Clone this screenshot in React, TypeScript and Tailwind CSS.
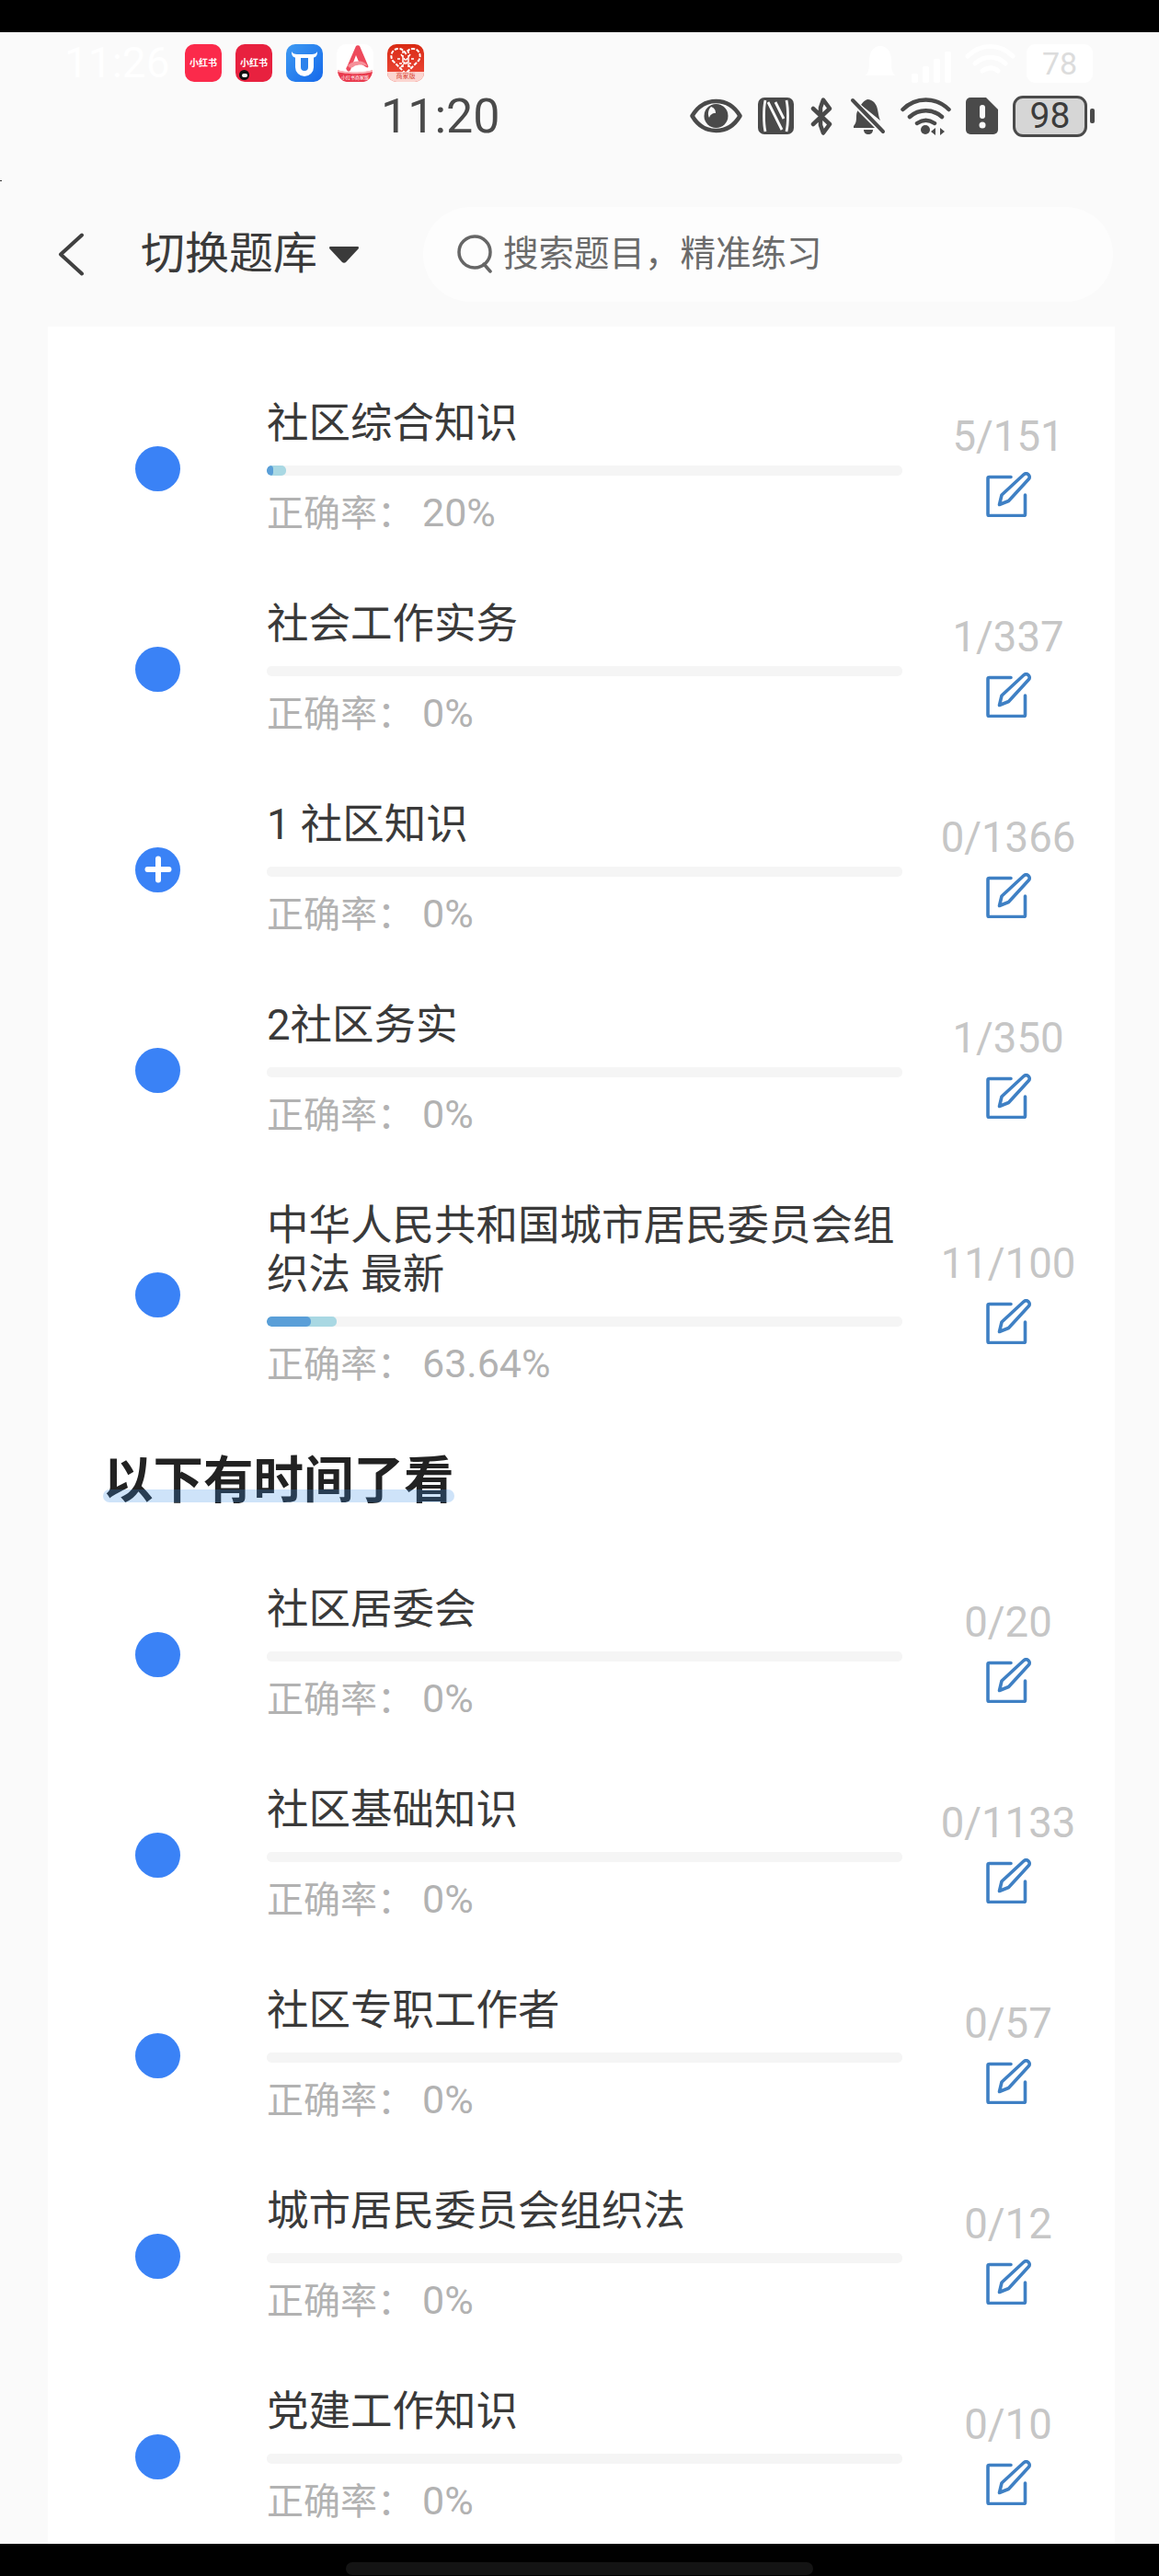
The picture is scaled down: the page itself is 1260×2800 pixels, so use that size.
import { Fragment } from 'react';

interface Subject {
  title: string;
  rate: string;
  count: string;
  plus?: boolean;
  fill?: { total: number; done: number };
}

const primary: Subject[] = [
  { title: '社区综合知识', rate: '20%', count: '5/151', fill: { total: 21, done: 7 } },
  { title: '社会工作实务', rate: '0%', count: '1/337' },
  { title: '1 社区知识', rate: '0%', count: '0/1366', plus: true },
  { title: '2社区务实', rate: '0%', count: '1/350' },
  { title: '中华人民共和国城市居民委员会组织法 最新', rate: '63.64%', count: '11/100', fill: { total: 76, done: 48 } },
];

const later: Subject[] = [
  { title: '社区居委会', rate: '0%', count: '0/20' },
  { title: '社区基础知识', rate: '0%', count: '0/1133' },
  { title: '社区专职工作者', rate: '0%', count: '0/57' },
  { title: '城市居民委员会组织法', rate: '0%', count: '0/12' },
  { title: '党建工作知识', rate: '0%', count: '0/10' },
];

function EditIcon() {
  return (
    <svg width="50" height="49" viewBox="0 0 50 49" fill="none" stroke="#3f80c4" strokeWidth="3.600" strokeLinecap="round" strokeLinejoin="round">
      <path d="M27 5.500H3.500a1.500 1.500 0 0 0-1.500 1.500V46a1.500 1.500 0 0 0 1.500 1.500H41a1.500 1.500 0 0 0 1.500-1.500V25" />
      <path d="M14.500 35.500l2.500-10.500L41 2.800c1.500-1.300 3.500-1.300 5 0s1.700 3.500.3 5L24.500 31.500z" />
    </svg>
  );
}

function SubjectRow({ subject }: { subject: Subject }) {
  return (
    <div className="flex items-center pl-[95px] pr-[31px] py-[33px]">
      <div className="w-[49px] h-[49px] shrink-0 rounded-full bg-[#3a82f6] flex items-center justify-center">
        {subject.plus && (
          <svg width="30" height="30" viewBox="0 0 30 30" stroke="#fff" strokeWidth="6" strokeLinecap="round">
            <path d="M3.500 15h23M15 3.500v23" />
          </svg>
        )}
      </div>
      <div className="w-[691px] ml-[94px] shrink-0">
        <div className="pt-[1px] pb-[1px] -mb-[2px] text-[45.500px] leading-[53px] text-[#3a3a3a]">{subject.title}</div>
        <div className="h-[11px] mt-[20px] rounded-[5px] bg-[#f5f5f5] overflow-hidden">
          {subject.fill && (
            <div className="h-full flex rounded-[5px] overflow-hidden bg-[#a9d8e3]" style={{ width: subject.fill.total }}>
              <div className="h-full rounded-[5px] bg-[#5a9fd8]" style={{ width: subject.fill.done }} />
            </div>
          )}
        </div>
        <div className="mt-[15px] h-[53px] text-[40px] leading-[53px] text-[#b2b2b2]">
          正确率：<span className="ml-[9px] text-[43px] leading-none">{subject.rate}</span>
        </div>
      </div>
      <div className="ml-[30px] w-[170px] shrink-0 flex flex-col items-center">
        <div className="text-[45.500px] leading-[38px] text-[#c6c6c6]">{subject.count}</div>
        <div className="mt-[19px] h-[49px] pl-[1px]">
          <EditIcon />
        </div>
      </div>
    </div>
  );
}

function AppIcons() {
  return (
    <div className="flex items-center gap-[15px]">
      <div className="w-[40px] h-[41px] rounded-[10px] bg-[#fb2a4b] flex items-center justify-center text-[10px] font-bold text-white">小红书</div>
      <div className="relative w-[40px] h-[41px] rounded-[10px] bg-[#e8213f] flex items-center justify-center text-[10px] font-bold text-white">
        小红书
        <span className="absolute left-[4px] bottom-[2px] w-[11px] h-[11px] rounded-full bg-[#111] flex items-center justify-center">
          <span className="w-[6px] h-[4px] rounded-full bg-white" />
        </span>
      </div>
      <div className="w-[40px] h-[41px] rounded-[10px] bg-linear-to-br from-[#3f9af2] to-[#1668ea] flex items-center justify-center">
        <svg width="30" height="31" viewBox="0 0 30 31" fill="none">
          <path d="M1 3c0 4 1 6 5 7h18c4-1 5-3 5-7-1 2-3 3-6 3H7C4 6 2 5 1 3z" fill="#fff" />
          <path d="M5 8h20v12a10 10 0 0 1-20 0z" fill="#fff" />
          <path d="M11 10h8v10a4 4 0 0 1-8 0z" fill="#2c82ec" />
        </svg>
      </div>
      <div className="relative w-[40px] h-[41px] rounded-[10px] bg-white overflow-hidden">
        <svg className="absolute left-0 top-0" width="40" height="41" viewBox="0 0 40 41">
          <path d="M21 2c1-1 3-1 4 0l9 21c1 2 0 3-2 2-3-2-6-4-9-5l1-1-3-7-6 16c-1 2-3 2-4 0-1-1-1-2 0-3z" fill="#ee4a5c" />
          <path d="M12 23c4-4 12-6 18-3 2 1 3 3 3 4-4-2-10-2-14 0-2 2-5 3-7-1z" fill="#f68f98" />
          <path d="M1 28c8 4 30 4 38 0v2c-1 6-5 11-10 11H11C6 41 2 36 1 30z" fill="#e93a4d" />
          <path d="M1 28c8 3 30 3 38 0v2c-8 3-30 3-38 0z" fill="#f9b3b8" />
        </svg>
        <div className="absolute bottom-[1px] inset-x-0 text-[5px] leading-[8px] text-center text-white">小红书商家版</div>
      </div>
      <div className="relative w-[40px] h-[41px] rounded-[10px] bg-linear-to-b from-[#d92a12] to-[#ef4a3a] overflow-hidden">
        <svg className="absolute left-[3px] top-[3px]" width="34" height="30" viewBox="0 0 34 30" fill="none" stroke="#fff" strokeWidth="2">
          <path d="M17 29L3 15C-1 9 3 2 9 2c4 0 6 2 8 5 2-3 4-5 8-5 6 0 10 7 6 13z" strokeDasharray="4 1.500" />
          <path d="M12 8l10 14M22 8L12 22M8 13h18M10 18h14M14 4v18M20 4v18" strokeWidth="1.500" strokeDasharray="3 2" />
        </svg>
        <div className="absolute bottom-0 inset-x-0 h-[11px] bg-[#fbd5d0] text-[7px] leading-[11px] text-center text-[#d9402f]">商家版</div>
      </div>
    </div>
  );
}

function StatusIcons() {
  return (
    <div className="flex items-center">
      <svg width="57" height="38" viewBox="0 0 57 38" fill="none">
        <path d="M2.500 19C9 8 18 3 28.500 3S48 8 54.500 19C48 30 39 35 28.500 35S9 30 2.500 19z" stroke="#4a4a4a" strokeWidth="4.500" strokeLinejoin="round" />
        <circle cx="28.500" cy="19" r="13" fill="#4a4a4a" />
        <path d="M23 9c3 1 5 3 5 7-4 0-6 2-7 5-2-4-1-9 2-12z" fill="#fafafa" />
      </svg>
      <svg className="ml-[17px]" width="39" height="40" viewBox="0 0 39 40">
        <rect width="39" height="40" rx="7" fill="#4a4a4a" />
        <path d="M8 3c-2 9-2 25 0 34M11 5l15 30M19 5l9 18M31 3c2 9 2 25 0 34" stroke="#fafafa" strokeWidth="2.800" fill="none" />
      </svg>
      <svg className="ml-[17px]" width="27" height="41" viewBox="0 0 27 41" fill="none" stroke="#4a4a4a" strokeWidth="4.500" strokeLinejoin="round" strokeLinecap="round">
        <path d="M4 12l18 17-7 9.500L12 30V11l3-8.500L22 12 4 29" />
      </svg>
      <svg className="ml-[17px]" width="39" height="41" viewBox="0 0 39 41">
        <path d="M4 31c3-3 3-7 3-11 0-3 1-6 3-8l19 20v1H4zM12 8c2-3 4-5 7-6 6 0 10 5 11 11 1 4 1 8 3 12z" fill="#4a4a4a" />
        <path d="M15 35h10c0 3-2 5-5 5s-5-2-5-5z" fill="#4a4a4a" />
        <path d="M2 3l35 35" stroke="#fafafa" strokeWidth="7" />
        <path d="M3 3l33 34" stroke="#4a4a4a" strokeWidth="4" strokeLinecap="round" />
      </svg>
      <svg className="ml-[16px]" width="55" height="41" viewBox="0 0 55 41" fill="none" stroke="#4a4a4a" strokeWidth="4.500" strokeLinecap="round">
        <path d="M2.500 13c14-14 36-14 50 0M10 21c10-9 25-9 35 0M18 28c6-4 13-4 19 0" />
        <circle cx="27" cy="35" r="5" fill="#4a4a4a" stroke="none" />
        <path d="M38 33l-5 4 5 4zM43 33l5 4-5 4z" fill="#4a4a4a" stroke="none" />
      </svg>
      <svg className="ml-[16px]" width="35" height="40" viewBox="0 0 35 40">
        <path d="M5 0h17l13 13v22a5 5 0 0 1-5 5H5a5 5 0 0 1-5-5V5a5 5 0 0 1 5-5z" fill="#4a4a4a" />
        <rect x="15" y="8" width="6" height="15" rx="3" fill="#fafafa" />
        <circle cx="18" cy="30" r="3.500" fill="#fafafa" />
      </svg>
      <div className="ml-[16px] w-[81px] h-[45px] rounded-[11px] border-[3px] border-[#4a4a4a] bg-[#d6d6d6] flex items-center justify-center text-[39px] leading-none text-[#3c3c3c]">98</div>
      <div className="ml-[3px] w-[5px] h-[16px] rounded-[2px] bg-[#4a4a4a]" />
    </div>
  );
}

export default function App() {
  return (
    <div className="relative w-[1260px] h-[2800px] flex flex-col overflow-hidden bg-[#fafafa] font-['Roboto','Noto_Sans_CJK_SC',sans-serif]">
      <div className="absolute left-0 top-[196px] w-[2px] h-[1px] bg-[#333]" />
      <div className="h-[35px] shrink-0 bg-black" />

      {/* status bar ghost from the app behind */}
      <div className="h-[65px] shrink-0 flex items-start pt-[13px] pl-[70px] pr-[72px]">
        <div className="w-[131px] text-[46px] leading-[41px] text-white">11:26</div>
        <AppIcons />
        <div className="ml-auto flex items-center gap-[12px]">
          <svg width="36" height="42" viewBox="0 0 36 42" fill="#fff">
            <path d="M2 34c4-4 4-10 4-16C6 8 11 2 18 2s12 6 12 16c0 6 0 12 4 16z" />
          </svg>
          <svg width="50" height="42" viewBox="0 0 50 42" fill="#fff">
            <rect x="4" y="32" width="7" height="10" rx="2" />
            <rect x="16" y="24" width="7" height="18" rx="2" />
            <rect x="28" y="16" width="7" height="26" rx="2" />
            <rect x="40" y="8" width="7" height="34" rx="2" />
          </svg>
          <svg width="55" height="42" viewBox="0 0 55 42" fill="none" stroke="#fff" strokeWidth="5" strokeLinecap="round">
            <path d="M3 13c14-14 35-14 49 0M11 21c10-9 24-9 33 0M19 29c6-4 12-4 17 0" />
          </svg>
          <div className="w-[72px] h-[42px] rounded-[9px] bg-white text-center text-[34px] leading-[42px] text-[#dcdcdc]">78</div>
        </div>
      </div>

      <div className="h-[50px] shrink-0 relative flex items-center pr-[70px] pt-[2px]">
        <div className="ml-[414px] mt-[2px] text-[52px] leading-[50px] text-[#4a4a4a]">11:20</div>
        <div className="ml-auto">
          <StatusIcons />
        </div>
      </div>

      <div className="h-[205px] shrink-0 flex items-center pt-[47px]">
        <svg className="ml-[62px]" width="30" height="47" viewBox="0 0 30 47" fill="none" stroke="#404040" strokeWidth="4" strokeLinecap="round" strokeLinejoin="round">
          <path d="M27 2.500L4 23.500l23 21" />
        </svg>
        <div className="ml-[61px] text-[48px] leading-none text-[#3a3a3a]">切换题库</div>
        <svg className="ml-[13px] mt-[2px]" width="32" height="18" viewBox="0 0 32 18" fill="#3a3a3a">
          <path d="M1.500 0h29c1.500 0 2 1 1 2.500L18 17c-1 1-3 1-4 0L.5 2.500C-.5 1 0 0 1.500 0z" />
        </svg>
        <div className="ml-[70px] w-[750px] h-[103px] rounded-[52px] bg-[#fdfdfd] flex items-center pl-[37px]">
          <svg width="40" height="42" viewBox="0 0 40 42" fill="none" stroke="#666" strokeWidth="3.500" strokeLinecap="round">
            <circle cx="19" cy="19" r="17" />
            <path d="M29 32l7 8" />
          </svg>
          <span className="ml-[10px] text-[38.500px] leading-none text-[#6b6b6b]">搜索题目，精准练习</span>
        </div>
      </div>

      <div className="flex-1 min-h-0 overflow-hidden">
        <div className="w-[1160px] ml-[52px] min-h-full bg-white pt-[45px]">
          {primary.map((subject) => (
            <Fragment key={subject.title}>
              <SubjectRow subject={subject} />
            </Fragment>
          ))}
          <div className="h-[146px] pt-[35px] pl-[60px]">
            <div className="relative inline-block text-[54.500px] leading-[62px] font-bold text-[#222]">
              以下有时间了看
              <div className="absolute left-0 right-0 bottom-[7px] h-[14px] rounded-[7px] bg-[#3d8fe8]/25" />
            </div>
          </div>
          {later.map((subject) => (
            <SubjectRow key={subject.title} subject={subject} />
          ))}
        </div>
      </div>

      <div className="h-[35px] shrink-0 bg-black flex items-end justify-center">
        <div className="w-[508px] h-[14px] mb-[1px] rounded-[7px] bg-[#141414]" />
      </div>
    </div>
  );
}
